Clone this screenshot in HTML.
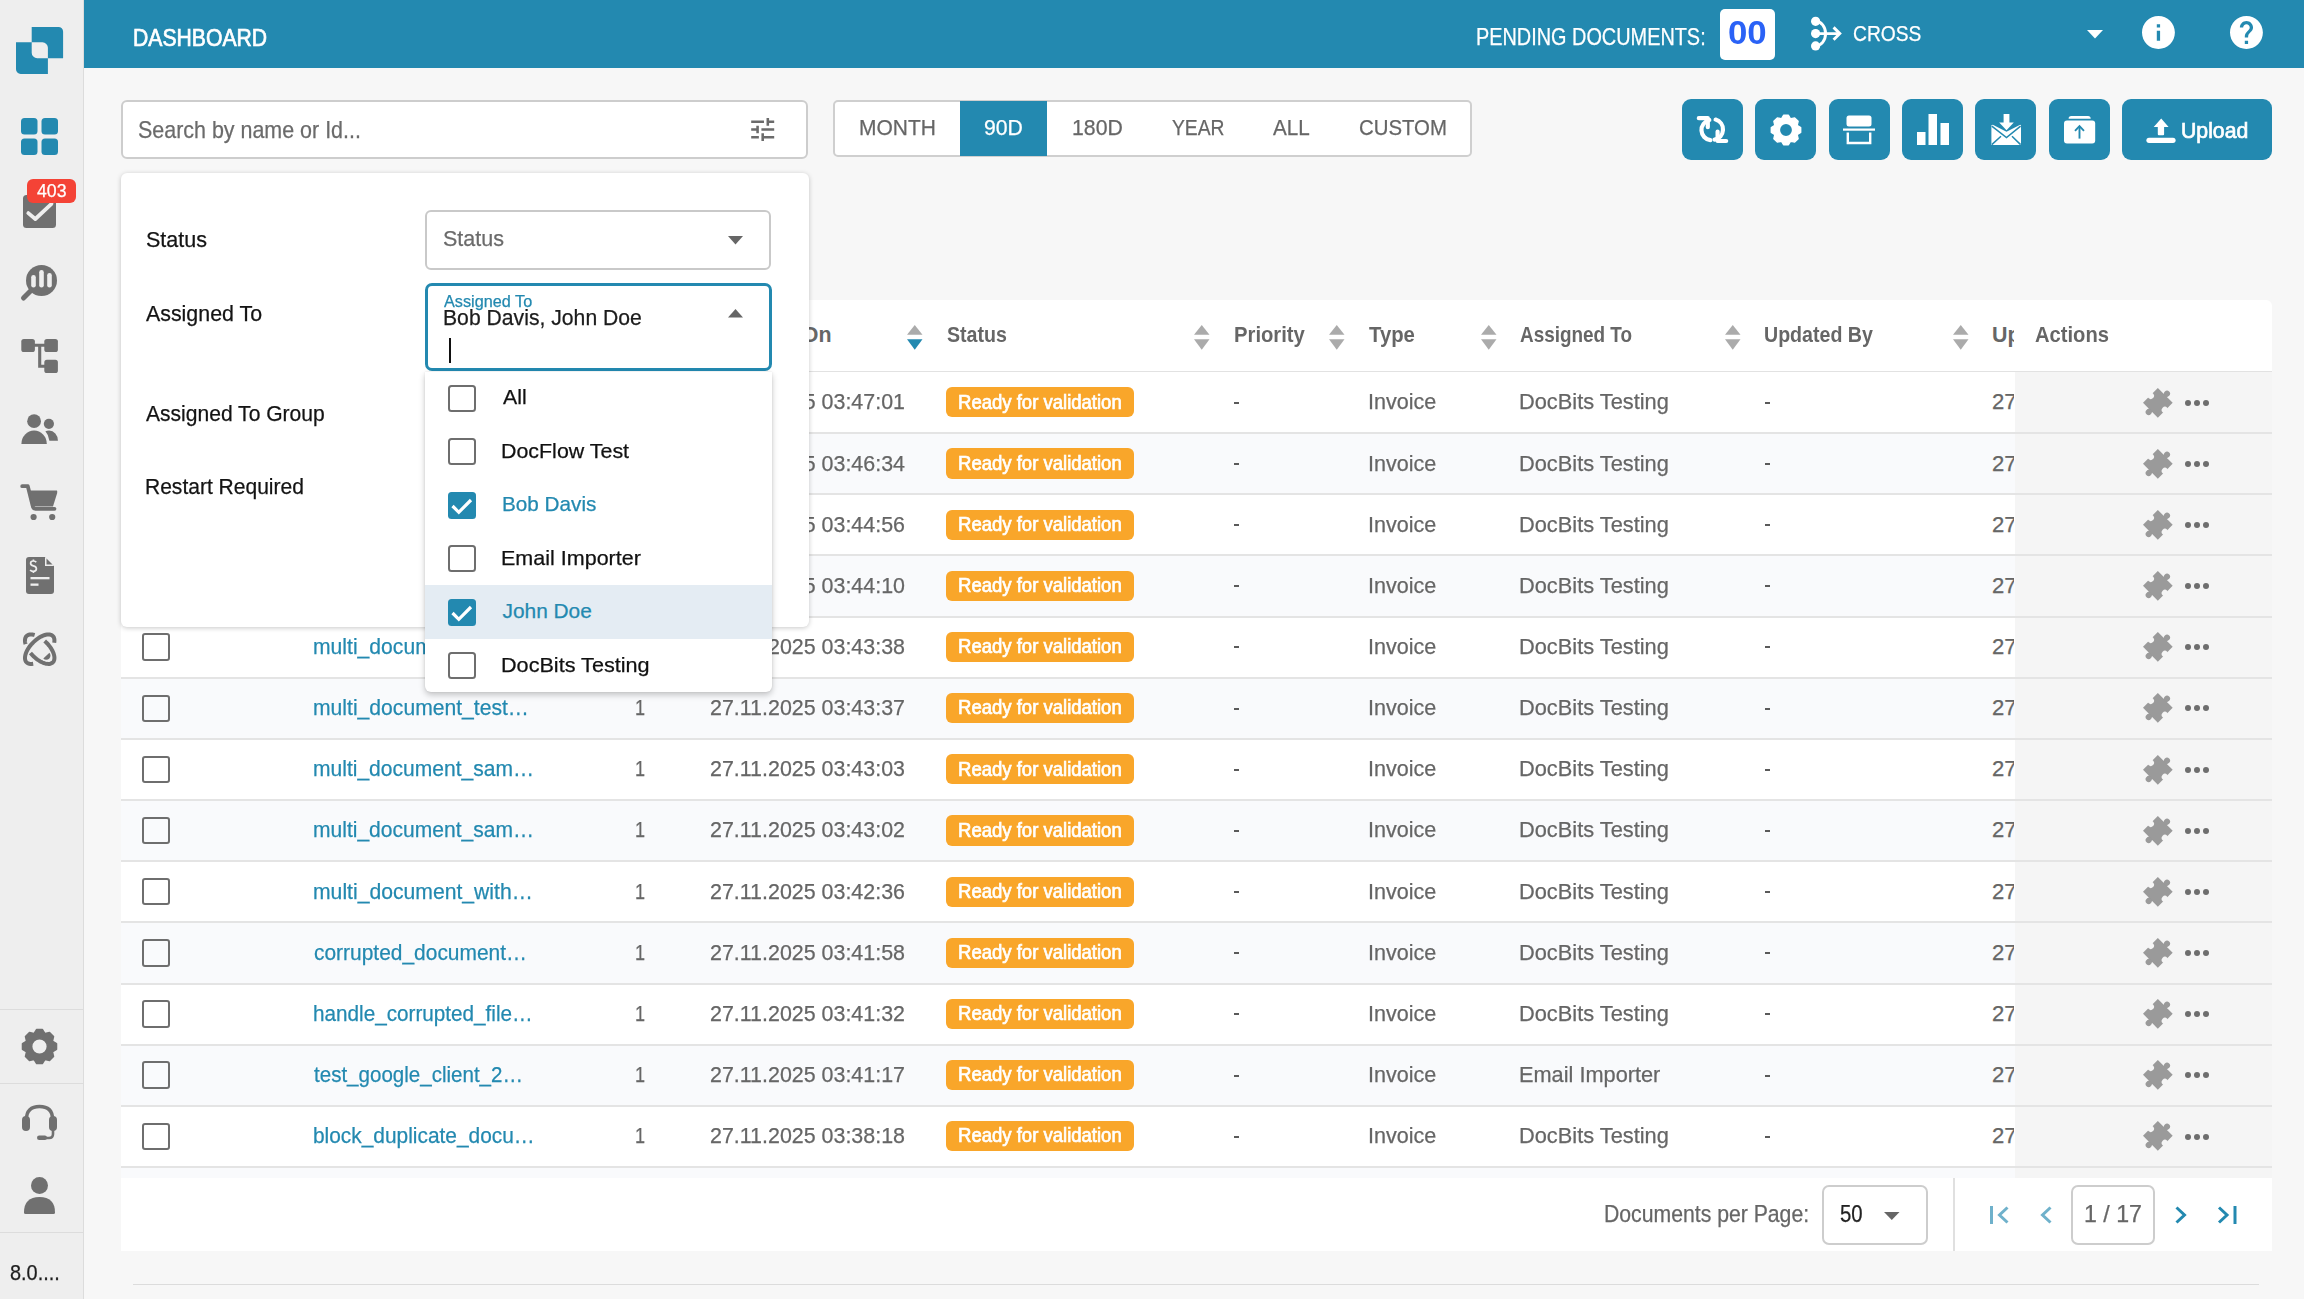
<!DOCTYPE html>
<html><head><meta charset="utf-8"><title>Dashboard</title>
<style>
html,body{margin:0;padding:0;width:2304px;height:1299px;overflow:hidden;background:#f7f7f7;font-family:"Liberation Sans",sans-serif;}
.a{position:absolute;box-sizing:border-box;}
.t{position:absolute;white-space:nowrap;line-height:1;transform-origin:0 0;}
svg.a{overflow:visible;}
</style></head><body>
<div class="a" style="left:0px;top:0px;width:84px;height:1299px;background:#eeeeee;border-right:1px solid #dcdcdc;"></div><svg class="a" style="left:16px;top:26.9px;width:48px;height:48px;" viewBox="0 0 48 48"><path fill="#2389b0" fill-rule="evenodd" d="M15.7 0 H42.5 A4.6 4.6 0 0 1 47.1 4.6 V31.2 H31.9 V46.9 H4.6 A4.6 4.6 0 0 1 0 42.3 V15.3 H15.7 Z M15.7 15.3 H26.4 A5.5 5.5 0 0 1 31.9 20.8 V31.2 H21.2 A5.5 5.5 0 0 1 15.7 25.7 Z"/></svg><svg class="a" style="left:21px;top:118px;width:37px;height:37px;" viewBox="0 0 37 37"><g fill="#2389b0"><rect x="0" y="0" width="16.5" height="16.5" rx="3.5"/><rect x="20.5" y="0" width="16.5" height="16.5" rx="3.5"/><rect x="0" y="20.5" width="16.5" height="16.5" rx="3.5"/><rect x="20.5" y="20.5" width="16.5" height="16.5" rx="3.5"/></g></svg><svg class="a" style="left:23px;top:195px;width:33px;height:33px;" viewBox="0 0 33 33"><rect x="0" y="0" width="33" height="33" rx="3.5" fill="#707070"/><path d="M5.3 18.1 L12.3 24 L28.5 8.9" stroke="#eeeeee" stroke-width="3.8" fill="none" stroke-linecap="round" stroke-linejoin="round"/></svg><div class="a" style="left:27px;top:179px;width:49px;height:24px;background:#f44336;border-radius:6px;"></div><div class="t" id="t0" style="left:37.00px;top:182.30px;font-size:18.0px;color:#fff;font-weight:normal;transform:scaleX(0.9826);-webkit-text-stroke:0.25px #fff;">403</div><svg class="a" style="left:21px;top:264px;width:37px;height:37px;" viewBox="0 0 37 37"><circle cx="20.5" cy="16.5" r="15.5" fill="#707070"/><g fill="#eeeeee"><rect x="10.2" y="11" width="4.6" height="12.5" rx="2.3"/><rect x="18.2" y="6" width="4.6" height="17.5" rx="2.3"/><rect x="26.2" y="9" width="4.6" height="14.5" rx="2.3"/></g><path d="M9.5 27 L2.5 34" stroke="#707070" stroke-width="5" stroke-linecap="round"/></svg><svg class="a" style="left:21px;top:338px;width:37px;height:36px;" viewBox="0 0 37 36"><g fill="#707070"><rect x="0.3" y="0.9" width="13.6" height="13.2" rx="2.6"/><rect x="23.3" y="0.9" width="13.6" height="13.2" rx="2.6"/><rect x="23.3" y="21.8" width="13.6" height="13.2" rx="2.6"/></g><path d="M12 7.3 H25 M18.7 7.3 V28.2 H25" stroke="#707070" stroke-width="3.1" fill="none"/></svg><svg class="a" style="left:21px;top:414px;width:38px;height:31px;" viewBox="0 0 38 31"><g fill="#707070"><circle cx="13.1" cy="7.2" r="6.9"/><path d="M0.4 30 A12.7 13.4 0 0 1 25.8 30 Z"/><circle cx="27.9" cy="9.8" r="5.1"/><path d="M24.4 17.3 Q26 16.5 28.1 16.5 A 8.8 10 0 0 1 36.9 26.5 V26.7 H28.4 Q27.6 20.8 24.4 17.3 Z"/></g></svg><svg class="a" style="left:21px;top:484px;width:37px;height:36px;" viewBox="0 0 37 36"><path d="M1.2 2.2 H6.8 L11.6 21.5 Q12 24.8 14.5 24.8 H33.5" stroke="#707070" stroke-width="3.8" fill="none" stroke-linecap="round" stroke-linejoin="round"/><path d="M8.5 6.6 H35.9 Q36.4 6.8 36.2 9 L32 22.5 H11.6 Z" fill="#707070"/><circle cx="12.6" cy="33" r="3.1" fill="#707070"/><circle cx="31.2" cy="33" r="3.1" fill="#707070"/></svg><svg class="a" style="left:26px;top:557px;width:28px;height:37px;" viewBox="0 0 28 37"><path d="M3 0 H19 L28 9 V34 Q28 37 25 37 H3 Q0 37 0 34 V3 Q0 0 3 0Z" fill="#707070"/><path d="M19 0 V9 H28" fill="#eeeeee"/><path d="M19.5 0 L28 8.5 H19.5Z" fill="#eeeeee"/><path d="M20.5 1.5 L26.5 7.5 H20.5Z" fill="#707070"/><path d="M10.2 5.2 Q9.5 4 7.3 4 Q4.6 4 4.6 6.3 Q4.6 8.3 7.3 8.9 Q10.4 9.6 10.4 11.8 Q10.4 14.3 7.3 14.3 Q5 14.3 4.2 12.8 M7.4 2.6 V4 M7.4 14.3 V15.9" stroke="#eeeeee" stroke-width="1.7" fill="none"/><rect x="4.5" y="20" width="19" height="2.3" fill="#eeeeee"/><rect x="4.5" y="26.5" width="8" height="2.3" fill="#eeeeee"/></svg><svg class="a" style="left:21px;top:630px;width:38px;height:38px;" viewBox="0 0 38 38"><g fill="none" stroke="#707070" stroke-width="4"><path d="M33.20 12.70 L33.40 11.27 L33.42 9.95 L33.26 8.74 L32.92 7.65 L32.41 6.71 L31.72 5.92 L30.88 5.30 L29.89 4.84 L28.76 4.56 L27.50 4.46 L26.14 4.55 L24.69 4.81 L23.17 5.24 L21.58 5.85 L19.97 6.63 L18.34 7.55 L16.71 8.62 L15.11 9.82 L13.55 11.14 L12.05 12.55 L10.64 14.05 L9.32 15.61 L8.12 17.21 L7.05 18.84 L6.13 20.47 L5.35 22.08 L4.74 23.67 L4.31 25.19 L4.05 26.64 L3.96 28.00 L4.06 29.26 L4.34 30.39 L4.80 31.38 L5.42 32.22 L6.21 32.91 L7.15 33.42 L8.24 33.76 L9.45 33.92 L10.77 33.90 L12.20 33.70"/><path d="M13.61 5.05 L13.10 4.90 L12.59 4.78 L12.09 4.68 L11.60 4.59 L11.12 4.53 L10.65 4.49 L10.20 4.47 L9.75 4.47 L9.32 4.49 L8.90 4.53 L8.49 4.59 L8.10 4.67 L7.72 4.77 L7.36 4.90 L7.02 5.04 L6.69 5.20 L6.38 5.38 L6.08 5.59 L5.81 5.81 L5.55 6.05 L5.31 6.31 L5.09 6.58 L4.88 6.88 L4.70 7.19 L4.54 7.52 L4.40 7.86 L4.27 8.22 L4.17 8.60 L4.09 8.99 L4.03 9.40 L3.99 9.82 L3.97 10.25 L3.97 10.70 L3.99 11.15 L4.03 11.62 L4.09 12.10 L4.18 12.59 L4.28 13.09 L4.40 13.60 L4.55 14.11"/><path d="M23.69 11.00 L24.88 12.09 L26.01 13.24 L27.10 14.43 L28.12 15.66 L29.06 16.91 L29.93 18.18 L30.72 19.46 L31.41 20.74 L32.01 22.00 L32.51 23.25 L32.90 24.46 L33.19 25.63 L33.37 26.76 L33.44 27.83 L33.39 28.83 L33.24 29.76 L32.97 30.61 L32.60 31.38 L32.13 32.05 L31.55 32.63 L30.88 33.10 L30.11 33.48 L29.26 33.74 L28.33 33.89 L27.32 33.94 L26.25 33.87 L25.13 33.69 L23.95 33.40 L22.74 33.01 L21.50 32.51 L20.23 31.91 L18.95 31.21 L17.68 30.43 L16.40 29.56 L15.15 28.61 L13.92 27.59 L12.73 26.51 L11.59 25.37 L10.49 24.19 L9.46 22.97"/></g><path d="M22.3 28.4 A4.14 4.14 0 0 0 28.4 22.8 Z" fill="#707070"/></svg><div class="a" style="left:0px;top:1009px;width:83px;height:1px;background:#dcdcdc;"></div><div class="a" style="left:0px;top:1083px;width:83px;height:1px;background:#dcdcdc;"></div><div class="a" style="left:0px;top:1232px;width:83px;height:1px;background:#dcdcdc;"></div><svg class="a" style="left:21px;top:1028px;width:37px;height:37px;" viewBox="0 0 37 37"><path fill="#707070" fill-rule="evenodd" stroke="#707070" stroke-width="1.6" stroke-linejoin="round" d="M13.37 5.26 L15.71 1.53 L21.29 1.53 L23.63 5.26 L24.23 5.51 L28.53 4.53 L32.47 8.47 L31.49 12.77 L31.74 13.37 L35.47 15.71 L35.47 21.29 L31.74 23.63 L31.49 24.23 L32.47 28.53 L28.53 32.47 L24.23 31.49 L23.63 31.74 L21.29 35.47 L15.71 35.47 L13.37 31.74 L12.77 31.49 L8.47 32.47 L4.53 28.53 L5.51 24.23 L5.26 23.63 L1.53 21.29 L1.53 15.71 L5.26 13.37 L5.51 12.77 L4.53 8.47 L8.47 4.53 L12.77 5.51Z M26.40 18.50 A7.9 7.9 0 1 0 10.60 18.50 A7.9 7.9 0 1 0 26.40 18.50Z"/></svg><svg class="a" style="left:22px;top:1104px;width:35px;height:36px;" viewBox="0 0 35 36"><path d="M4.5 19 V15 Q4.5 2.5 17.5 2.5 Q30.5 2.5 30.5 15 V19" stroke="#707070" stroke-width="3.4" fill="none"/><rect x="0" y="12" width="8" height="15" rx="4" fill="#707070"/><rect x="27" y="12" width="8" height="15" rx="4" fill="#707070"/><path d="M31 24 V30 Q31 34 27 34 H21" stroke="#707070" stroke-width="2.6" fill="none"/><rect x="15" y="31.5" width="10" height="4.5" rx="2.2" fill="#707070"/></svg><svg class="a" style="left:24px;top:1177px;width:31px;height:37px;" viewBox="0 0 31 37"><circle cx="15.5" cy="8.5" r="8.5" fill="#707070"/><path d="M0 35.5 Q0 20 15.5 20 Q31 20 31 35.5 Q31 37 29.5 37 H1.5 Q0 37 0 35.5Z" fill="#707070"/></svg><div class="t" id="t1" style="left:9.70px;top:1263.48px;font-size:21.43px;color:#1e1e1e;font-weight:normal;transform:scaleX(0.9296);-webkit-text-stroke:0.25px #1e1e1e;">8.0....</div><div class="a" style="left:84px;top:0px;width:2220px;height:68px;background:#2389b0;"></div><div class="t" id="t2" style="left:133.11px;top:26.02px;font-size:23.86px;color:#fff;font-weight:normal;transform:scaleX(0.8872);-webkit-text-stroke:0.7px #fff;">DASHBOARD</div><div class="t" id="t3" style="left:1475.66px;top:25.77px;font-size:23.57px;color:#fff;font-weight:normal;transform:scaleX(0.8434);-webkit-text-stroke:0.25px #fff;">PENDING DOCUMENTS:</div><div class="a" style="left:1720px;top:9px;width:55px;height:51px;background:#fff;border-radius:5px;"></div><div class="t" id="t4" style="left:1728.43px;top:17.43px;font-size:32.43px;color:#2a62f6;font-weight:bold;transform:scaleX(1.0725);">00</div><svg class="a" style="left:1810px;top:16px;width:32px;height:34px;" viewBox="0 0 32 34"><g fill="#fff"><circle cx="5.6" cy="5.3" r="4.6"/><circle cx="5.6" cy="17.6" r="4.6"/><circle cx="5.6" cy="29.9" r="4.6"/></g><path d="M5.6 5.3 A 10 12.3 0 0 1 5.6 29.9 M8 17.6 H30" stroke="#fff" stroke-width="2.9" fill="none"/><path d="M24.6 12.4 L29.8 17.6 L24.6 22.8" stroke="#fff" stroke-width="2.9" fill="none" stroke-linecap="square"/></svg><div class="t" id="t5" style="left:1853.44px;top:22.83px;font-size:22.43px;color:#fff;font-weight:normal;transform:scaleX(0.8575);-webkit-text-stroke:0.25px #fff;">CROSS</div><svg class="a" style="left:2087px;top:30px;width:16px;height:9px;" viewBox="0 0 16 9"><path d="M0 0 H16 L8 8.5Z" fill="#fff"/></svg><svg class="a" style="left:2141.5px;top:15.9px;width:32.9px;height:32.9px;" viewBox="2 2 20 20"><path fill="#fff" d="M12 2C6.48 2 2 6.48 2 12s4.48 10 10 10 10-4.48 10-10S17.52 2 12 2zm1 15h-2v-6h2v6zm0-8h-2V7h2v2z"/></svg><svg class="a" style="left:2229.7px;top:15.9px;width:32.9px;height:32.9px;" viewBox="2 2 20 20"><path fill="#fff" d="M12 2C6.48 2 2 6.48 2 12s4.48 10 10 10 10-4.48 10-10S17.52 2 12 2zm1 17h-2v-2h2v2zm2.07-7.75-.9.92C13.45 12.9 13 13.5 13 15h-2v-.5c0-1.1.45-2.1 1.17-2.83l1.24-1.26c.37-.36.59-.86.59-1.41 0-1.1-.9-2-2-2s-2 .9-2 2H8c0-2.210 1.79-4 4-4s4 1.79 4 4c0 .88-.36 1.68-.93 2.25z"/></svg><div class="a" style="left:121px;top:100px;width:687px;height:59px;background:#fff;border:2px solid #cdcdcd;border-radius:6px;"></div><div class="t" id="t6" style="left:138.11px;top:118.10px;font-size:24.0px;color:#6b6b6b;font-weight:normal;transform:scaleX(0.8935);-webkit-text-stroke:0.25px #6b6b6b;">Search by name or Id...</div><svg class="a" style="left:751.2px;top:117.9px;width:23.4px;height:23px;overflow:hidden;" viewBox="3 3 18 18"><path fill="#6b6b6b" d="M3 17v2h6v-2H3zM3 5v2h10V5H3zm10 16v-2h8v-2h-8v-2h-2v6h2zM7 9v2H3v2h4v2h2V9H7zm14 4v-2H11v2h10zm-6-4h2V7h4V5h-4V3h-2v6z"/></svg><div class="a" style="left:833px;top:100px;width:639px;height:57px;background:#fff;border:2px solid #cfcfcf;border-radius:5px;"></div><div class="a" style="left:960px;top:101px;width:87px;height:55px;background:#2389b0;"></div><div class="t" id="t7" style="left:858.95px;top:116.88px;font-size:22.14px;color:#666666;font-weight:normal;transform:scaleX(0.9478);-webkit-text-stroke:0.25px #666666;">MONTH</div><div class="t" id="t8" style="left:984.44px;top:116.88px;font-size:22.14px;color:#fff;font-weight:normal;transform:scaleX(0.9583);-webkit-text-stroke:0.25px #fff;">90D</div><div class="t" id="t9" style="left:1071.64px;top:116.88px;font-size:22.14px;color:#666666;font-weight:normal;transform:scaleX(0.9604);-webkit-text-stroke:0.25px #666666;">180D</div><div class="t" id="t10" style="left:1172.20px;top:116.88px;font-size:22.14px;color:#666666;font-weight:normal;transform:scaleX(0.8723);-webkit-text-stroke:0.25px #666666;">YEAR</div><div class="t" id="t11" style="left:1273.40px;top:116.88px;font-size:22.14px;color:#666666;font-weight:normal;transform:scaleX(0.9344);-webkit-text-stroke:0.25px #666666;">ALL</div><div class="t" id="t12" style="left:1359.08px;top:116.88px;font-size:22.14px;color:#666666;font-weight:normal;transform:scaleX(0.9211);-webkit-text-stroke:0.25px #666666;">CUSTOM</div><div class="a" style="left:1682px;top:99px;width:61px;height:61px;background:#2389b0;border-radius:9px;"></div><div class="a" style="left:1755px;top:99px;width:61px;height:61px;background:#2389b0;border-radius:9px;"></div><div class="a" style="left:1829px;top:99px;width:61px;height:61px;background:#2389b0;border-radius:9px;"></div><div class="a" style="left:1902px;top:99px;width:61px;height:61px;background:#2389b0;border-radius:9px;"></div><div class="a" style="left:1975px;top:99px;width:61px;height:61px;background:#2389b0;border-radius:9px;"></div><div class="a" style="left:2049px;top:99px;width:61px;height:61px;background:#2389b0;border-radius:9px;"></div><svg class="a" style="left:1697px;top:115px;width:31px;height:29px;" viewBox="0 0 31 29"><g stroke="#fff" stroke-width="4.2" fill="none" stroke-linecap="round" stroke-linejoin="round"><path d="M12.3 5 A 10.3 10.3 0 0 0 13.4 25.2"/><path d="M1.8 3.2 H10.8 V12.2"/><path d="M18.6 4.6 A 10.3 10.3 0 0 1 17.6 24.6"/><path d="M29.2 26 H20.6 V16.6"/></g></svg><svg class="a" style="left:1770px;top:114px;width:32px;height:32px;" viewBox="0 0 32 32"><path fill="#fff" fill-rule="evenodd" stroke="#fff" stroke-width="1.4" stroke-linejoin="round" d="M11.60 4.51 L13.56 1.30 L18.44 1.30 L20.40 4.51 L21.01 4.77 L24.67 3.88 L28.12 7.33 L27.23 10.99 L27.49 11.60 L30.70 13.56 L30.70 18.44 L27.49 20.40 L27.23 21.01 L28.12 24.67 L24.67 28.12 L21.01 27.23 L20.40 27.49 L18.44 30.70 L13.56 30.70 L11.60 27.49 L10.99 27.23 L7.33 28.12 L3.88 24.67 L4.77 21.01 L4.51 20.40 L1.30 18.44 L1.30 13.56 L4.51 11.60 L4.77 10.99 L3.88 7.33 L7.33 3.88 L10.99 4.77Z M22.60 16.00 A6.6 6.6 0 1 0 9.40 16.00 A6.6 6.6 0 1 0 22.60 16.00Z"/></svg><svg class="a" style="left:1843px;top:115px;width:32px;height:30px;" viewBox="0 0 32 30"><rect x="3.5" y="0.5" width="25" height="11" rx="2.5" fill="#fff"/><rect x="0" y="13.5" width="32" height="2.2" fill="#fff"/><path d="M4.8 17.5 V28 H27.2 V17.5" stroke="#fff" stroke-width="2.4" fill="none"/></svg><svg class="a" style="left:1917px;top:114px;width:32px;height:31px;" viewBox="0 0 32 31"><g fill="#fff"><rect x="0" y="18" width="8.5" height="13"/><rect x="11.5" y="0" width="8.5" height="31"/><rect x="23.5" y="9" width="8.5" height="22"/></g></svg><svg class="a" style="left:1991px;top:114px;width:30px;height:31px;" viewBox="0 0 30 31"><rect x="12.6" y="0" width="5.8" height="9.5" fill="#fff"/><path d="M8.2 8.6 H22.8 L15.5 16.3Z" fill="#fff"/><path d="M0.4 11.3 L1.8 10.8 L15.5 17.8 L29.2 10.8 L30 11.3 V31 H0.4Z" fill="#fff"/><path d="M0.8 12.2 L15.5 23.6 L29.6 12.2 M0.8 30.6 L10 22.2 M29.6 30.6 L21 22.2" stroke="#2389b0" stroke-width="1.5" fill="none"/></svg><svg class="a" style="left:2064px;top:115.7px;width:31.2px;height:27.5px;" viewBox="0 0 31.2 27.5"><path d="M4.6 2.7 Q4.6 0 7.3 0 H24 Q26.7 0 26.7 2.7Z" fill="#fff"/><rect x="0" y="4.5" width="31.2" height="23" rx="3" fill="#fff"/><path d="M15.5 22.6 V10.4" stroke="#2389b0" stroke-width="1.9"/><path d="M11 14.9 L15.5 10.2 L20 14.9" stroke="#2389b0" stroke-width="1.9" fill="none"/></svg><div class="a" style="left:2122px;top:99px;width:150px;height:61px;background:#2389b0;border-radius:9px;"></div><svg class="a" style="left:2146px;top:118px;width:30px;height:25px;" viewBox="0 0 30 25"><path d="M15.2 0.6 L22.6 9 H18.1 V16.3 Q18.1 17.3 17.1 17.3 H12.8 Q11.8 17.3 11.8 16.3 V9 H7.7Z" fill="#fff"/><rect x="0.4" y="19.7" width="29.2" height="5.2" rx="2.6" fill="#fff"/></svg><div class="t" id="t13" style="left:2180.55px;top:120.15px;font-size:22.29px;color:#fff;font-weight:normal;transform:scaleX(0.9529);-webkit-text-stroke:0.7px #fff;">Upload</div><svg width="0" height="0" style="position:absolute"><defs><mask id="pzm" maskUnits="userSpaceOnUse" x="-20" y="-20" width="40" height="40"><rect x="-20" y="-20" width="40" height="40" fill="#fff"/><circle cx="-10" cy="0" r="3.2" fill="#000"/><circle cx="10" cy="0" r="3.2" fill="#000"/></mask><symbol id="puz" viewBox="0 0 30 30" overflow="visible"><g transform="translate(14.84 14.86) rotate(45)"><g mask="url(#pzm)" fill="#9a9a9a"><rect x="-10.5" y="-10.5" width="21" height="21"/><rect x="-2.3" y="-12.5" width="4.6" height="3"/><circle cx="0" cy="-13" r="3"/><rect x="-2.3" y="9.5" width="4.6" height="3"/><circle cx="0" cy="13" r="3"/></g></g></symbol></defs></svg><div class="a" style="left:121px;top:300px;width:2151px;height:72px;background:#fff;border-top-left-radius:6px;border-top-right-radius:6px;"></div><div class="a" style="left:121px;top:371px;width:2151px;height:2px;background:#e2e2e2;"></div><div class="t" id="t14" style="left:716.00px;top:324.68px;font-size:21.43px;color:#666666;font-weight:bold;">Created On</div><svg class="a" style="left:906.5px;top:324.7px;width:15.5px;height:25px;" viewBox="0 0 15.5 25"><path d="M7.75 0 L15.5 9.7 H0Z" fill="#ababab"/><path d="M0 14.3 H15.5 L7.75 24.8Z" fill="#2389b0"/></svg><div class="t" id="t15" style="left:946.90px;top:324.68px;font-size:21.43px;color:#666666;font-weight:bold;transform:scaleX(0.9153);">Status</div><svg class="a" style="left:1194px;top:324.7px;width:15.5px;height:25px;" viewBox="0 0 15.5 25"><path d="M7.75 0 L15.5 9.7 H0Z" fill="#ababab"/><path d="M0 14.3 H15.5 L7.75 24.8Z" fill="#ababab"/></svg><div class="t" id="t16" style="left:1233.66px;top:324.68px;font-size:21.43px;color:#666666;font-weight:bold;transform:scaleX(0.9449);">Priority</div><svg class="a" style="left:1329px;top:324.7px;width:15.5px;height:25px;" viewBox="0 0 15.5 25"><path d="M7.75 0 L15.5 9.7 H0Z" fill="#ababab"/><path d="M0 14.3 H15.5 L7.75 24.8Z" fill="#ababab"/></svg><div class="t" id="t17" style="left:1369.30px;top:324.68px;font-size:21.43px;color:#666666;font-weight:bold;transform:scaleX(0.9486);">Type</div><svg class="a" style="left:1480.7px;top:324.7px;width:15.5px;height:25px;" viewBox="0 0 15.5 25"><path d="M7.75 0 L15.5 9.7 H0Z" fill="#ababab"/><path d="M0 14.3 H15.5 L7.75 24.8Z" fill="#ababab"/></svg><div class="t" id="t18" style="left:1520.40px;top:324.68px;font-size:21.43px;color:#666666;font-weight:bold;transform:scaleX(0.8828);">Assigned To</div><svg class="a" style="left:1725.4px;top:324.7px;width:15.5px;height:25px;" viewBox="0 0 15.5 25"><path d="M7.75 0 L15.5 9.7 H0Z" fill="#ababab"/><path d="M0 14.3 H15.5 L7.75 24.8Z" fill="#ababab"/></svg><div class="t" id="t19" style="left:1764.09px;top:324.68px;font-size:21.43px;color:#666666;font-weight:bold;transform:scaleX(0.9144);">Updated By</div><svg class="a" style="left:1952.8px;top:324.7px;width:15.5px;height:25px;" viewBox="0 0 15.5 25"><path d="M7.75 0 L15.5 9.7 H0Z" fill="#ababab"/><path d="M0 14.3 H15.5 L7.75 24.8Z" fill="#ababab"/></svg><div class="t" id="t20" style="left:1992.00px;top:324.68px;font-size:21.43px;color:#666666;font-weight:bold;clip-path:inset(-5px calc(100% - 22px) -5px -5px);">Updated On</div><div class="t" id="t21" style="left:2035.00px;top:324.68px;font-size:21.43px;color:#666666;font-weight:bold;transform:scaleX(0.9410);">Actions</div><div class="a" style="left:121px;top:372.0px;width:2151px;height:61.14999999999998px;background:#ffffff;"></div><div class="a" style="left:2015px;top:372.0px;width:257px;height:61.14999999999998px;background:#f5f5f5;"></div><div class="a" style="left:142px;top:388.8px;width:27.5px;height:27.399999999999977px;border:2px solid #6e6e6e;border-radius:3px;"></div><div class="t" id="t22" style="left:312.65px;top:391.38px;font-size:22.14px;color:#2389b0;font-weight:normal;transform:scaleX(0.9545);-webkit-text-stroke:0.25px #2389b0;">multi_document_test…</div><div class="t" id="t23" style="left:635.08px;top:391.38px;font-size:22.14px;color:#666666;font-weight:normal;transform:scaleX(0.8182);-webkit-text-stroke:0.25px #666666;">1</div><div class="t" id="t24" style="left:710.33px;top:391.38px;font-size:22.14px;color:#666666;font-weight:normal;transform:scaleX(0.9682);-webkit-text-stroke:0.25px #666666;">27.11.2025 03:47:01</div><div class="a" style="left:946.4px;top:387.3px;width:187.19999999999993px;height:30.19999999999999px;background:#f9a62a;border-radius:6px;"></div><div class="t" id="t25" style="left:958.45px;top:392.68px;font-size:19.43px;color:#fff;font-weight:normal;transform:scaleX(0.9537);-webkit-text-stroke:0.7px #fff;">Ready for validation</div><div class="a" style="left:1234px;top:402px;width:5px;height:2px;background:#5a5a5a;"></div><div class="t" id="t26" style="left:1368.05px;top:391.38px;font-size:22.14px;color:#666666;font-weight:normal;transform:scaleX(0.9735);-webkit-text-stroke:0.25px #666666;">Invoice</div><div class="t" id="t27" style="left:1519.41px;top:391.38px;font-size:22.14px;color:#666666;font-weight:normal;transform:scaleX(0.9855);-webkit-text-stroke:0.25px #666666;">DocBits Testing</div><div class="a" style="left:1765px;top:402px;width:5px;height:2px;background:#5a5a5a;"></div><div class="t" id="t28" style="left:1992.00px;top:391.38px;font-size:22.14px;color:#666666;font-weight:normal;-webkit-text-stroke:0.25px #666666;clip-path:inset(-5px calc(100% - 22px) -5px -5px);">27.11.2025 03:47</div><svg class="a" style="left:2142.5px;top:387.60px;width:30px;height:30px;overflow:visible" viewBox="0 0 30 30"><use href="#puz"/></svg><div class="a" style="left:2184.8px;top:399.7px;width:6.0px;height:6.0px;background:#6e6e6e;border-radius:50%;"></div><div class="a" style="left:2193.9px;top:399.7px;width:6.0px;height:6.0px;background:#6e6e6e;border-radius:50%;"></div><div class="a" style="left:2203.1px;top:399.7px;width:6.0px;height:6.0px;background:#6e6e6e;border-radius:50%;"></div><div class="a" style="left:121px;top:433.15px;width:2151px;height:61.150000000000034px;background:#f9fafc;"></div><div class="a" style="left:2015px;top:433.15px;width:257px;height:61.150000000000034px;background:#f5f5f5;"></div><div class="a" style="left:142px;top:449.95px;width:27.5px;height:27.400000000000034px;border:2px solid #6e6e6e;border-radius:3px;"></div><div class="t" id="t29" style="left:312.65px;top:452.53px;font-size:22.14px;color:#2389b0;font-weight:normal;transform:scaleX(0.9508);-webkit-text-stroke:0.25px #2389b0;">multi_document_sam…</div><div class="t" id="t30" style="left:635.08px;top:452.53px;font-size:22.14px;color:#666666;font-weight:normal;transform:scaleX(0.8182);-webkit-text-stroke:0.25px #666666;">1</div><div class="t" id="t31" style="left:710.33px;top:452.53px;font-size:22.14px;color:#666666;font-weight:normal;transform:scaleX(0.9682);-webkit-text-stroke:0.25px #666666;">27.11.2025 03:46:34</div><div class="a" style="left:946.4px;top:448.45px;width:187.19999999999993px;height:30.19999999999999px;background:#f9a62a;border-radius:6px;"></div><div class="t" id="t32" style="left:958.45px;top:453.83px;font-size:19.43px;color:#fff;font-weight:normal;transform:scaleX(0.9537);-webkit-text-stroke:0.7px #fff;">Ready for validation</div><div class="a" style="left:1234px;top:463px;width:5px;height:2px;background:#5a5a5a;"></div><div class="t" id="t33" style="left:1368.05px;top:452.53px;font-size:22.14px;color:#666666;font-weight:normal;transform:scaleX(0.9735);-webkit-text-stroke:0.25px #666666;">Invoice</div><div class="t" id="t34" style="left:1519.41px;top:452.53px;font-size:22.14px;color:#666666;font-weight:normal;transform:scaleX(0.9855);-webkit-text-stroke:0.25px #666666;">DocBits Testing</div><div class="a" style="left:1765px;top:463px;width:5px;height:2px;background:#5a5a5a;"></div><div class="t" id="t35" style="left:1992.00px;top:452.53px;font-size:22.14px;color:#666666;font-weight:normal;-webkit-text-stroke:0.25px #666666;clip-path:inset(-5px calc(100% - 22px) -5px -5px);">27.11.2025 03:47</div><svg class="a" style="left:2142.5px;top:448.75px;width:30px;height:30px;overflow:visible" viewBox="0 0 30 30"><use href="#puz"/></svg><div class="a" style="left:2184.8px;top:460.85px;width:6.0px;height:6.0px;background:#6e6e6e;border-radius:50%;"></div><div class="a" style="left:2193.9px;top:460.85px;width:6.0px;height:6.0px;background:#6e6e6e;border-radius:50%;"></div><div class="a" style="left:2203.1px;top:460.85px;width:6.0px;height:6.0px;background:#6e6e6e;border-radius:50%;"></div><div class="a" style="left:121px;top:494.3px;width:2151px;height:61.150000000000034px;background:#ffffff;"></div><div class="a" style="left:2015px;top:494.3px;width:257px;height:61.150000000000034px;background:#f5f5f5;"></div><div class="a" style="left:142px;top:511.1px;width:27.5px;height:27.399999999999977px;border:2px solid #6e6e6e;border-radius:3px;"></div><div class="t" id="t36" style="left:312.65px;top:513.68px;font-size:22.14px;color:#2389b0;font-weight:normal;transform:scaleX(0.9508);-webkit-text-stroke:0.25px #2389b0;">multi_document_sam…</div><div class="t" id="t37" style="left:635.08px;top:513.68px;font-size:22.14px;color:#666666;font-weight:normal;transform:scaleX(0.8182);-webkit-text-stroke:0.25px #666666;">1</div><div class="t" id="t38" style="left:710.33px;top:513.68px;font-size:22.14px;color:#666666;font-weight:normal;transform:scaleX(0.9682);-webkit-text-stroke:0.25px #666666;">27.11.2025 03:44:56</div><div class="a" style="left:946.4px;top:509.6px;width:187.19999999999993px;height:30.199999999999932px;background:#f9a62a;border-radius:6px;"></div><div class="t" id="t39" style="left:958.45px;top:514.98px;font-size:19.43px;color:#fff;font-weight:normal;transform:scaleX(0.9537);-webkit-text-stroke:0.7px #fff;">Ready for validation</div><div class="a" style="left:1234px;top:524px;width:5px;height:2px;background:#5a5a5a;"></div><div class="t" id="t40" style="left:1368.05px;top:513.68px;font-size:22.14px;color:#666666;font-weight:normal;transform:scaleX(0.9735);-webkit-text-stroke:0.25px #666666;">Invoice</div><div class="t" id="t41" style="left:1519.41px;top:513.68px;font-size:22.14px;color:#666666;font-weight:normal;transform:scaleX(0.9855);-webkit-text-stroke:0.25px #666666;">DocBits Testing</div><div class="a" style="left:1765px;top:524px;width:5px;height:2px;background:#5a5a5a;"></div><div class="t" id="t42" style="left:1992.00px;top:513.68px;font-size:22.14px;color:#666666;font-weight:normal;-webkit-text-stroke:0.25px #666666;clip-path:inset(-5px calc(100% - 22px) -5px -5px);">27.11.2025 03:47</div><svg class="a" style="left:2142.5px;top:509.90px;width:30px;height:30px;overflow:visible" viewBox="0 0 30 30"><use href="#puz"/></svg><div class="a" style="left:2184.8px;top:522.0px;width:6.0px;height:6.0px;background:#6e6e6e;border-radius:50%;"></div><div class="a" style="left:2193.9px;top:522.0px;width:6.0px;height:6.0px;background:#6e6e6e;border-radius:50%;"></div><div class="a" style="left:2203.1px;top:522.0px;width:6.0px;height:6.0px;background:#6e6e6e;border-radius:50%;"></div><div class="a" style="left:121px;top:555.45px;width:2151px;height:61.14999999999998px;background:#f9fafc;"></div><div class="a" style="left:2015px;top:555.45px;width:257px;height:61.14999999999998px;background:#f5f5f5;"></div><div class="a" style="left:142px;top:572.25px;width:27.5px;height:27.399999999999977px;border:2px solid #6e6e6e;border-radius:3px;"></div><div class="t" id="t43" style="left:312.64px;top:574.83px;font-size:22.14px;color:#2389b0;font-weight:normal;transform:scaleX(0.9558);-webkit-text-stroke:0.25px #2389b0;">multi_document_with…</div><div class="t" id="t44" style="left:635.08px;top:574.83px;font-size:22.14px;color:#666666;font-weight:normal;transform:scaleX(0.8182);-webkit-text-stroke:0.25px #666666;">1</div><div class="t" id="t45" style="left:710.33px;top:574.83px;font-size:22.14px;color:#666666;font-weight:normal;transform:scaleX(0.9682);-webkit-text-stroke:0.25px #666666;">27.11.2025 03:44:10</div><div class="a" style="left:946.4px;top:570.75px;width:187.19999999999993px;height:30.200000000000045px;background:#f9a62a;border-radius:6px;"></div><div class="t" id="t46" style="left:958.45px;top:576.13px;font-size:19.43px;color:#fff;font-weight:normal;transform:scaleX(0.9537);-webkit-text-stroke:0.7px #fff;">Ready for validation</div><div class="a" style="left:1234px;top:585px;width:5px;height:2px;background:#5a5a5a;"></div><div class="t" id="t47" style="left:1368.05px;top:574.83px;font-size:22.14px;color:#666666;font-weight:normal;transform:scaleX(0.9735);-webkit-text-stroke:0.25px #666666;">Invoice</div><div class="t" id="t48" style="left:1519.41px;top:574.83px;font-size:22.14px;color:#666666;font-weight:normal;transform:scaleX(0.9855);-webkit-text-stroke:0.25px #666666;">DocBits Testing</div><div class="a" style="left:1765px;top:585px;width:5px;height:2px;background:#5a5a5a;"></div><div class="t" id="t49" style="left:1992.00px;top:574.83px;font-size:22.14px;color:#666666;font-weight:normal;-webkit-text-stroke:0.25px #666666;clip-path:inset(-5px calc(100% - 22px) -5px -5px);">27.11.2025 03:47</div><svg class="a" style="left:2142.5px;top:571.05px;width:30px;height:30px;overflow:visible" viewBox="0 0 30 30"><use href="#puz"/></svg><div class="a" style="left:2184.8px;top:583.15px;width:6.0px;height:6.0px;background:#6e6e6e;border-radius:50%;"></div><div class="a" style="left:2193.9px;top:583.15px;width:6.0px;height:6.0px;background:#6e6e6e;border-radius:50%;"></div><div class="a" style="left:2203.1px;top:583.15px;width:6.0px;height:6.0px;background:#6e6e6e;border-radius:50%;"></div><div class="a" style="left:121px;top:616.6px;width:2151px;height:61.14999999999998px;background:#ffffff;"></div><div class="a" style="left:2015px;top:616.6px;width:257px;height:61.14999999999998px;background:#f5f5f5;"></div><div class="a" style="left:142px;top:633.4px;width:27.5px;height:27.399999999999977px;border:2px solid #6e6e6e;border-radius:3px;"></div><div class="t" id="t50" style="left:312.65px;top:635.98px;font-size:22.14px;color:#2389b0;font-weight:normal;transform:scaleX(0.9545);-webkit-text-stroke:0.25px #2389b0;">multi_document_test…</div><div class="t" id="t51" style="left:635.08px;top:635.98px;font-size:22.14px;color:#666666;font-weight:normal;transform:scaleX(0.8182);-webkit-text-stroke:0.25px #666666;">1</div><div class="t" id="t52" style="left:710.33px;top:635.98px;font-size:22.14px;color:#666666;font-weight:normal;transform:scaleX(0.9682);-webkit-text-stroke:0.25px #666666;">27.11.2025 03:43:38</div><div class="a" style="left:946.4px;top:631.9px;width:187.19999999999993px;height:30.200000000000045px;background:#f9a62a;border-radius:6px;"></div><div class="t" id="t53" style="left:958.45px;top:637.28px;font-size:19.43px;color:#fff;font-weight:normal;transform:scaleX(0.9537);-webkit-text-stroke:0.7px #fff;">Ready for validation</div><div class="a" style="left:1234px;top:646px;width:5px;height:2px;background:#5a5a5a;"></div><div class="t" id="t54" style="left:1368.05px;top:635.98px;font-size:22.14px;color:#666666;font-weight:normal;transform:scaleX(0.9735);-webkit-text-stroke:0.25px #666666;">Invoice</div><div class="t" id="t55" style="left:1519.41px;top:635.98px;font-size:22.14px;color:#666666;font-weight:normal;transform:scaleX(0.9855);-webkit-text-stroke:0.25px #666666;">DocBits Testing</div><div class="a" style="left:1765px;top:646px;width:5px;height:2px;background:#5a5a5a;"></div><div class="t" id="t56" style="left:1992.00px;top:635.98px;font-size:22.14px;color:#666666;font-weight:normal;-webkit-text-stroke:0.25px #666666;clip-path:inset(-5px calc(100% - 22px) -5px -5px);">27.11.2025 03:47</div><svg class="a" style="left:2142.5px;top:632.20px;width:30px;height:30px;overflow:visible" viewBox="0 0 30 30"><use href="#puz"/></svg><div class="a" style="left:2184.8px;top:644.3px;width:6.0px;height:6.0px;background:#6e6e6e;border-radius:50%;"></div><div class="a" style="left:2193.9px;top:644.3px;width:6.0px;height:6.0px;background:#6e6e6e;border-radius:50%;"></div><div class="a" style="left:2203.1px;top:644.3px;width:6.0px;height:6.0px;background:#6e6e6e;border-radius:50%;"></div><div class="a" style="left:121px;top:677.75px;width:2151px;height:61.14999999999998px;background:#f9fafc;"></div><div class="a" style="left:2015px;top:677.75px;width:257px;height:61.14999999999998px;background:#f5f5f5;"></div><div class="a" style="left:142px;top:694.55px;width:27.5px;height:27.40000000000009px;border:2px solid #6e6e6e;border-radius:3px;"></div><div class="t" id="t57" style="left:312.65px;top:697.13px;font-size:22.14px;color:#2389b0;font-weight:normal;transform:scaleX(0.9545);-webkit-text-stroke:0.25px #2389b0;">multi_document_test…</div><div class="t" id="t58" style="left:635.08px;top:697.13px;font-size:22.14px;color:#666666;font-weight:normal;transform:scaleX(0.8182);-webkit-text-stroke:0.25px #666666;">1</div><div class="t" id="t59" style="left:710.33px;top:697.13px;font-size:22.14px;color:#666666;font-weight:normal;transform:scaleX(0.9682);-webkit-text-stroke:0.25px #666666;">27.11.2025 03:43:37</div><div class="a" style="left:946.4px;top:693.05px;width:187.19999999999993px;height:30.200000000000045px;background:#f9a62a;border-radius:6px;"></div><div class="t" id="t60" style="left:958.45px;top:698.43px;font-size:19.43px;color:#fff;font-weight:normal;transform:scaleX(0.9537);-webkit-text-stroke:0.7px #fff;">Ready for validation</div><div class="a" style="left:1234px;top:708px;width:5px;height:2px;background:#5a5a5a;"></div><div class="t" id="t61" style="left:1368.05px;top:697.13px;font-size:22.14px;color:#666666;font-weight:normal;transform:scaleX(0.9735);-webkit-text-stroke:0.25px #666666;">Invoice</div><div class="t" id="t62" style="left:1519.41px;top:697.13px;font-size:22.14px;color:#666666;font-weight:normal;transform:scaleX(0.9855);-webkit-text-stroke:0.25px #666666;">DocBits Testing</div><div class="a" style="left:1765px;top:708px;width:5px;height:2px;background:#5a5a5a;"></div><div class="t" id="t63" style="left:1992.00px;top:697.13px;font-size:22.14px;color:#666666;font-weight:normal;-webkit-text-stroke:0.25px #666666;clip-path:inset(-5px calc(100% - 22px) -5px -5px);">27.11.2025 03:47</div><svg class="a" style="left:2142.5px;top:693.35px;width:30px;height:30px;overflow:visible" viewBox="0 0 30 30"><use href="#puz"/></svg><div class="a" style="left:2184.8px;top:705.45px;width:6.0px;height:6.0px;background:#6e6e6e;border-radius:50%;"></div><div class="a" style="left:2193.9px;top:705.45px;width:6.0px;height:6.0px;background:#6e6e6e;border-radius:50%;"></div><div class="a" style="left:2203.1px;top:705.45px;width:6.0px;height:6.0px;background:#6e6e6e;border-radius:50%;"></div><div class="a" style="left:121px;top:738.9px;width:2151px;height:61.14999999999998px;background:#ffffff;"></div><div class="a" style="left:2015px;top:738.9px;width:257px;height:61.14999999999998px;background:#f5f5f5;"></div><div class="a" style="left:142px;top:755.7px;width:27.5px;height:27.399999999999977px;border:2px solid #6e6e6e;border-radius:3px;"></div><div class="t" id="t64" style="left:312.65px;top:758.28px;font-size:22.14px;color:#2389b0;font-weight:normal;transform:scaleX(0.9508);-webkit-text-stroke:0.25px #2389b0;">multi_document_sam…</div><div class="t" id="t65" style="left:635.08px;top:758.28px;font-size:22.14px;color:#666666;font-weight:normal;transform:scaleX(0.8182);-webkit-text-stroke:0.25px #666666;">1</div><div class="t" id="t66" style="left:710.33px;top:758.28px;font-size:22.14px;color:#666666;font-weight:normal;transform:scaleX(0.9682);-webkit-text-stroke:0.25px #666666;">27.11.2025 03:43:03</div><div class="a" style="left:946.4px;top:754.2px;width:187.19999999999993px;height:30.199999999999932px;background:#f9a62a;border-radius:6px;"></div><div class="t" id="t67" style="left:958.45px;top:759.58px;font-size:19.43px;color:#fff;font-weight:normal;transform:scaleX(0.9537);-webkit-text-stroke:0.7px #fff;">Ready for validation</div><div class="a" style="left:1234px;top:769px;width:5px;height:2px;background:#5a5a5a;"></div><div class="t" id="t68" style="left:1368.05px;top:758.28px;font-size:22.14px;color:#666666;font-weight:normal;transform:scaleX(0.9735);-webkit-text-stroke:0.25px #666666;">Invoice</div><div class="t" id="t69" style="left:1519.41px;top:758.28px;font-size:22.14px;color:#666666;font-weight:normal;transform:scaleX(0.9855);-webkit-text-stroke:0.25px #666666;">DocBits Testing</div><div class="a" style="left:1765px;top:769px;width:5px;height:2px;background:#5a5a5a;"></div><div class="t" id="t70" style="left:1992.00px;top:758.28px;font-size:22.14px;color:#666666;font-weight:normal;-webkit-text-stroke:0.25px #666666;clip-path:inset(-5px calc(100% - 22px) -5px -5px);">27.11.2025 03:47</div><svg class="a" style="left:2142.5px;top:754.50px;width:30px;height:30px;overflow:visible" viewBox="0 0 30 30"><use href="#puz"/></svg><div class="a" style="left:2184.8px;top:766.6px;width:6.0px;height:6.0px;background:#6e6e6e;border-radius:50%;"></div><div class="a" style="left:2193.9px;top:766.6px;width:6.0px;height:6.0px;background:#6e6e6e;border-radius:50%;"></div><div class="a" style="left:2203.1px;top:766.6px;width:6.0px;height:6.0px;background:#6e6e6e;border-radius:50%;"></div><div class="a" style="left:121px;top:800.05px;width:2151px;height:61.15000000000009px;background:#f9fafc;"></div><div class="a" style="left:2015px;top:800.05px;width:257px;height:61.15000000000009px;background:#f5f5f5;"></div><div class="a" style="left:142px;top:816.85px;width:27.5px;height:27.399999999999977px;border:2px solid #6e6e6e;border-radius:3px;"></div><div class="t" id="t71" style="left:312.65px;top:819.43px;font-size:22.14px;color:#2389b0;font-weight:normal;transform:scaleX(0.9508);-webkit-text-stroke:0.25px #2389b0;">multi_document_sam…</div><div class="t" id="t72" style="left:635.08px;top:819.43px;font-size:22.14px;color:#666666;font-weight:normal;transform:scaleX(0.8182);-webkit-text-stroke:0.25px #666666;">1</div><div class="t" id="t73" style="left:710.33px;top:819.43px;font-size:22.14px;color:#666666;font-weight:normal;transform:scaleX(0.9682);-webkit-text-stroke:0.25px #666666;">27.11.2025 03:43:02</div><div class="a" style="left:946.4px;top:815.35px;width:187.19999999999993px;height:30.199999999999932px;background:#f9a62a;border-radius:6px;"></div><div class="t" id="t74" style="left:958.45px;top:820.73px;font-size:19.43px;color:#fff;font-weight:normal;transform:scaleX(0.9537);-webkit-text-stroke:0.7px #fff;">Ready for validation</div><div class="a" style="left:1234px;top:830px;width:5px;height:2px;background:#5a5a5a;"></div><div class="t" id="t75" style="left:1368.05px;top:819.43px;font-size:22.14px;color:#666666;font-weight:normal;transform:scaleX(0.9735);-webkit-text-stroke:0.25px #666666;">Invoice</div><div class="t" id="t76" style="left:1519.41px;top:819.43px;font-size:22.14px;color:#666666;font-weight:normal;transform:scaleX(0.9855);-webkit-text-stroke:0.25px #666666;">DocBits Testing</div><div class="a" style="left:1765px;top:830px;width:5px;height:2px;background:#5a5a5a;"></div><div class="t" id="t77" style="left:1992.00px;top:819.43px;font-size:22.14px;color:#666666;font-weight:normal;-webkit-text-stroke:0.25px #666666;clip-path:inset(-5px calc(100% - 22px) -5px -5px);">27.11.2025 03:47</div><svg class="a" style="left:2142.5px;top:815.65px;width:30px;height:30px;overflow:visible" viewBox="0 0 30 30"><use href="#puz"/></svg><div class="a" style="left:2184.8px;top:827.75px;width:6.0px;height:6.0px;background:#6e6e6e;border-radius:50%;"></div><div class="a" style="left:2193.9px;top:827.75px;width:6.0px;height:6.0px;background:#6e6e6e;border-radius:50%;"></div><div class="a" style="left:2203.1px;top:827.75px;width:6.0px;height:6.0px;background:#6e6e6e;border-radius:50%;"></div><div class="a" style="left:121px;top:861.2px;width:2151px;height:61.14999999999998px;background:#ffffff;"></div><div class="a" style="left:2015px;top:861.2px;width:257px;height:61.14999999999998px;background:#f5f5f5;"></div><div class="a" style="left:142px;top:878.0px;width:27.5px;height:27.399999999999977px;border:2px solid #6e6e6e;border-radius:3px;"></div><div class="t" id="t78" style="left:312.64px;top:880.58px;font-size:22.14px;color:#2389b0;font-weight:normal;transform:scaleX(0.9558);-webkit-text-stroke:0.25px #2389b0;">multi_document_with…</div><div class="t" id="t79" style="left:635.08px;top:880.58px;font-size:22.14px;color:#666666;font-weight:normal;transform:scaleX(0.8182);-webkit-text-stroke:0.25px #666666;">1</div><div class="t" id="t80" style="left:710.33px;top:880.58px;font-size:22.14px;color:#666666;font-weight:normal;transform:scaleX(0.9682);-webkit-text-stroke:0.25px #666666;">27.11.2025 03:42:36</div><div class="a" style="left:946.4px;top:876.5px;width:187.19999999999993px;height:30.200000000000045px;background:#f9a62a;border-radius:6px;"></div><div class="t" id="t81" style="left:958.45px;top:881.88px;font-size:19.43px;color:#fff;font-weight:normal;transform:scaleX(0.9537);-webkit-text-stroke:0.7px #fff;">Ready for validation</div><div class="a" style="left:1234px;top:891px;width:5px;height:2px;background:#5a5a5a;"></div><div class="t" id="t82" style="left:1368.05px;top:880.58px;font-size:22.14px;color:#666666;font-weight:normal;transform:scaleX(0.9735);-webkit-text-stroke:0.25px #666666;">Invoice</div><div class="t" id="t83" style="left:1519.41px;top:880.58px;font-size:22.14px;color:#666666;font-weight:normal;transform:scaleX(0.9855);-webkit-text-stroke:0.25px #666666;">DocBits Testing</div><div class="a" style="left:1765px;top:891px;width:5px;height:2px;background:#5a5a5a;"></div><div class="t" id="t84" style="left:1992.00px;top:880.58px;font-size:22.14px;color:#666666;font-weight:normal;-webkit-text-stroke:0.25px #666666;clip-path:inset(-5px calc(100% - 22px) -5px -5px);">27.11.2025 03:47</div><svg class="a" style="left:2142.5px;top:876.80px;width:30px;height:30px;overflow:visible" viewBox="0 0 30 30"><use href="#puz"/></svg><div class="a" style="left:2184.8px;top:888.9px;width:6.0px;height:6.0px;background:#6e6e6e;border-radius:50%;"></div><div class="a" style="left:2193.9px;top:888.9px;width:6.0px;height:6.0px;background:#6e6e6e;border-radius:50%;"></div><div class="a" style="left:2203.1px;top:888.9px;width:6.0px;height:6.0px;background:#6e6e6e;border-radius:50%;"></div><div class="a" style="left:121px;top:922.35px;width:2151px;height:61.14999999999998px;background:#f9fafc;"></div><div class="a" style="left:2015px;top:922.35px;width:257px;height:61.14999999999998px;background:#f5f5f5;"></div><div class="a" style="left:142px;top:939.15px;width:27.5px;height:27.399999999999977px;border:2px solid #6e6e6e;border-radius:3px;"></div><div class="t" id="t85" style="left:313.60px;top:941.73px;font-size:22.14px;color:#2389b0;font-weight:normal;transform:scaleX(0.9464);-webkit-text-stroke:0.25px #2389b0;">corrupted_document…</div><div class="t" id="t86" style="left:635.08px;top:941.73px;font-size:22.14px;color:#666666;font-weight:normal;transform:scaleX(0.8182);-webkit-text-stroke:0.25px #666666;">1</div><div class="t" id="t87" style="left:710.33px;top:941.73px;font-size:22.14px;color:#666666;font-weight:normal;transform:scaleX(0.9682);-webkit-text-stroke:0.25px #666666;">27.11.2025 03:41:58</div><div class="a" style="left:946.4px;top:937.65px;width:187.19999999999993px;height:30.200000000000045px;background:#f9a62a;border-radius:6px;"></div><div class="t" id="t88" style="left:958.45px;top:943.03px;font-size:19.43px;color:#fff;font-weight:normal;transform:scaleX(0.9537);-webkit-text-stroke:0.7px #fff;">Ready for validation</div><div class="a" style="left:1234px;top:952px;width:5px;height:2px;background:#5a5a5a;"></div><div class="t" id="t89" style="left:1368.05px;top:941.73px;font-size:22.14px;color:#666666;font-weight:normal;transform:scaleX(0.9735);-webkit-text-stroke:0.25px #666666;">Invoice</div><div class="t" id="t90" style="left:1519.41px;top:941.73px;font-size:22.14px;color:#666666;font-weight:normal;transform:scaleX(0.9855);-webkit-text-stroke:0.25px #666666;">DocBits Testing</div><div class="a" style="left:1765px;top:952px;width:5px;height:2px;background:#5a5a5a;"></div><div class="t" id="t91" style="left:1992.00px;top:941.73px;font-size:22.14px;color:#666666;font-weight:normal;-webkit-text-stroke:0.25px #666666;clip-path:inset(-5px calc(100% - 22px) -5px -5px);">27.11.2025 03:47</div><svg class="a" style="left:2142.5px;top:937.95px;width:30px;height:30px;overflow:visible" viewBox="0 0 30 30"><use href="#puz"/></svg><div class="a" style="left:2184.8px;top:950.05px;width:6.0px;height:6.0px;background:#6e6e6e;border-radius:50%;"></div><div class="a" style="left:2193.9px;top:950.05px;width:6.0px;height:6.0px;background:#6e6e6e;border-radius:50%;"></div><div class="a" style="left:2203.1px;top:950.05px;width:6.0px;height:6.0px;background:#6e6e6e;border-radius:50%;"></div><div class="a" style="left:121px;top:983.5px;width:2151px;height:61.15000000000009px;background:#ffffff;"></div><div class="a" style="left:2015px;top:983.5px;width:257px;height:61.15000000000009px;background:#f5f5f5;"></div><div class="a" style="left:142px;top:1000.3px;width:27.5px;height:27.40000000000009px;border:2px solid #6e6e6e;border-radius:3px;"></div><div class="t" id="t92" style="left:312.66px;top:1002.88px;font-size:22.14px;color:#2389b0;font-weight:normal;transform:scaleX(0.9353);-webkit-text-stroke:0.25px #2389b0;">handle_corrupted_file…</div><div class="t" id="t93" style="left:635.08px;top:1002.88px;font-size:22.14px;color:#666666;font-weight:normal;transform:scaleX(0.8182);-webkit-text-stroke:0.25px #666666;">1</div><div class="t" id="t94" style="left:710.33px;top:1002.88px;font-size:22.14px;color:#666666;font-weight:normal;transform:scaleX(0.9682);-webkit-text-stroke:0.25px #666666;">27.11.2025 03:41:32</div><div class="a" style="left:946.4px;top:998.8px;width:187.19999999999993px;height:30.200000000000045px;background:#f9a62a;border-radius:6px;"></div><div class="t" id="t95" style="left:958.45px;top:1004.18px;font-size:19.43px;color:#fff;font-weight:normal;transform:scaleX(0.9537);-webkit-text-stroke:0.7px #fff;">Ready for validation</div><div class="a" style="left:1234px;top:1013px;width:5px;height:2px;background:#5a5a5a;"></div><div class="t" id="t96" style="left:1368.05px;top:1002.88px;font-size:22.14px;color:#666666;font-weight:normal;transform:scaleX(0.9735);-webkit-text-stroke:0.25px #666666;">Invoice</div><div class="t" id="t97" style="left:1519.41px;top:1002.88px;font-size:22.14px;color:#666666;font-weight:normal;transform:scaleX(0.9855);-webkit-text-stroke:0.25px #666666;">DocBits Testing</div><div class="a" style="left:1765px;top:1013px;width:5px;height:2px;background:#5a5a5a;"></div><div class="t" id="t98" style="left:1992.00px;top:1002.88px;font-size:22.14px;color:#666666;font-weight:normal;-webkit-text-stroke:0.25px #666666;clip-path:inset(-5px calc(100% - 22px) -5px -5px);">27.11.2025 03:47</div><svg class="a" style="left:2142.5px;top:999.10px;width:30px;height:30px;overflow:visible" viewBox="0 0 30 30"><use href="#puz"/></svg><div class="a" style="left:2184.8px;top:1011.2px;width:6.0px;height:6.0px;background:#6e6e6e;border-radius:50%;"></div><div class="a" style="left:2193.9px;top:1011.2px;width:6.0px;height:6.0px;background:#6e6e6e;border-radius:50%;"></div><div class="a" style="left:2203.1px;top:1011.2px;width:6.0px;height:6.0px;background:#6e6e6e;border-radius:50%;"></div><div class="a" style="left:121px;top:1044.65px;width:2151px;height:61.149999999999864px;background:#f9fafc;"></div><div class="a" style="left:2015px;top:1044.65px;width:257px;height:61.149999999999864px;background:#f5f5f5;"></div><div class="a" style="left:142px;top:1061.45px;width:27.5px;height:27.399999999999864px;border:2px solid #6e6e6e;border-radius:3px;"></div><div class="t" id="t99" style="left:313.60px;top:1064.03px;font-size:22.14px;color:#2389b0;font-weight:normal;transform:scaleX(0.9284);-webkit-text-stroke:0.25px #2389b0;">test_google_client_2…</div><div class="t" id="t100" style="left:635.08px;top:1064.03px;font-size:22.14px;color:#666666;font-weight:normal;transform:scaleX(0.8182);-webkit-text-stroke:0.25px #666666;">1</div><div class="t" id="t101" style="left:710.33px;top:1064.03px;font-size:22.14px;color:#666666;font-weight:normal;transform:scaleX(0.9682);-webkit-text-stroke:0.25px #666666;">27.11.2025 03:41:17</div><div class="a" style="left:946.4px;top:1059.95px;width:187.19999999999993px;height:30.200000000000045px;background:#f9a62a;border-radius:6px;"></div><div class="t" id="t102" style="left:958.45px;top:1065.33px;font-size:19.43px;color:#fff;font-weight:normal;transform:scaleX(0.9537);-webkit-text-stroke:0.7px #fff;">Ready for validation</div><div class="a" style="left:1234px;top:1075px;width:5px;height:2px;background:#5a5a5a;"></div><div class="t" id="t103" style="left:1368.05px;top:1064.03px;font-size:22.14px;color:#666666;font-weight:normal;transform:scaleX(0.9735);-webkit-text-stroke:0.25px #666666;">Invoice</div><div class="t" id="t104" style="left:1519.42px;top:1064.03px;font-size:22.14px;color:#666666;font-weight:normal;transform:scaleX(0.9826);-webkit-text-stroke:0.25px #666666;">Email Importer</div><div class="a" style="left:1765px;top:1075px;width:5px;height:2px;background:#5a5a5a;"></div><div class="t" id="t105" style="left:1992.00px;top:1064.03px;font-size:22.14px;color:#666666;font-weight:normal;-webkit-text-stroke:0.25px #666666;clip-path:inset(-5px calc(100% - 22px) -5px -5px);">27.11.2025 03:47</div><svg class="a" style="left:2142.5px;top:1060.25px;width:30px;height:30px;overflow:visible" viewBox="0 0 30 30"><use href="#puz"/></svg><div class="a" style="left:2184.8px;top:1072.35px;width:6.0px;height:6.0px;background:#6e6e6e;border-radius:50%;"></div><div class="a" style="left:2193.9px;top:1072.35px;width:6.0px;height:6.0px;background:#6e6e6e;border-radius:50%;"></div><div class="a" style="left:2203.1px;top:1072.35px;width:6.0px;height:6.0px;background:#6e6e6e;border-radius:50%;"></div><div class="a" style="left:121px;top:1105.8px;width:2151px;height:61.15000000000009px;background:#ffffff;"></div><div class="a" style="left:2015px;top:1105.8px;width:257px;height:61.15000000000009px;background:#f5f5f5;"></div><div class="a" style="left:142px;top:1122.6px;width:27.5px;height:27.40000000000009px;border:2px solid #6e6e6e;border-radius:3px;"></div><div class="t" id="t106" style="left:312.66px;top:1125.18px;font-size:22.14px;color:#2389b0;font-weight:normal;transform:scaleX(0.9439);-webkit-text-stroke:0.25px #2389b0;">block_duplicate_docu…</div><div class="t" id="t107" style="left:635.08px;top:1125.18px;font-size:22.14px;color:#666666;font-weight:normal;transform:scaleX(0.8182);-webkit-text-stroke:0.25px #666666;">1</div><div class="t" id="t108" style="left:710.33px;top:1125.18px;font-size:22.14px;color:#666666;font-weight:normal;transform:scaleX(0.9682);-webkit-text-stroke:0.25px #666666;">27.11.2025 03:38:18</div><div class="a" style="left:946.4px;top:1121.1px;width:187.19999999999993px;height:30.200000000000045px;background:#f9a62a;border-radius:6px;"></div><div class="t" id="t109" style="left:958.45px;top:1126.48px;font-size:19.43px;color:#fff;font-weight:normal;transform:scaleX(0.9537);-webkit-text-stroke:0.7px #fff;">Ready for validation</div><div class="a" style="left:1234px;top:1136px;width:5px;height:2px;background:#5a5a5a;"></div><div class="t" id="t110" style="left:1368.05px;top:1125.18px;font-size:22.14px;color:#666666;font-weight:normal;transform:scaleX(0.9735);-webkit-text-stroke:0.25px #666666;">Invoice</div><div class="t" id="t111" style="left:1519.41px;top:1125.18px;font-size:22.14px;color:#666666;font-weight:normal;transform:scaleX(0.9855);-webkit-text-stroke:0.25px #666666;">DocBits Testing</div><div class="a" style="left:1765px;top:1136px;width:5px;height:2px;background:#5a5a5a;"></div><div class="t" id="t112" style="left:1992.00px;top:1125.18px;font-size:22.14px;color:#666666;font-weight:normal;-webkit-text-stroke:0.25px #666666;clip-path:inset(-5px calc(100% - 22px) -5px -5px);">27.11.2025 03:47</div><svg class="a" style="left:2142.5px;top:1121.40px;width:30px;height:30px;overflow:visible" viewBox="0 0 30 30"><use href="#puz"/></svg><div class="a" style="left:2184.8px;top:1133.5px;width:6.0px;height:6.0px;background:#6e6e6e;border-radius:50%;"></div><div class="a" style="left:2193.9px;top:1133.5px;width:6.0px;height:6.0px;background:#6e6e6e;border-radius:50%;"></div><div class="a" style="left:2203.1px;top:1133.5px;width:6.0px;height:6.0px;background:#6e6e6e;border-radius:50%;"></div><div class="a" style="left:121px;top:432px;width:2151px;height:2px;background:#e4e4e4;"></div><div class="a" style="left:121px;top:493px;width:2151px;height:2px;background:#e4e4e4;"></div><div class="a" style="left:121px;top:554px;width:2151px;height:2px;background:#e4e4e4;"></div><div class="a" style="left:121px;top:616px;width:2151px;height:2px;background:#e4e4e4;"></div><div class="a" style="left:121px;top:677px;width:2151px;height:2px;background:#e4e4e4;"></div><div class="a" style="left:121px;top:738px;width:2151px;height:2px;background:#e4e4e4;"></div><div class="a" style="left:121px;top:799px;width:2151px;height:2px;background:#e4e4e4;"></div><div class="a" style="left:121px;top:860px;width:2151px;height:2px;background:#e4e4e4;"></div><div class="a" style="left:121px;top:921px;width:2151px;height:2px;background:#e4e4e4;"></div><div class="a" style="left:121px;top:983px;width:2151px;height:2px;background:#e4e4e4;"></div><div class="a" style="left:121px;top:1044px;width:2151px;height:2px;background:#e4e4e4;"></div><div class="a" style="left:121px;top:1105px;width:2151px;height:2px;background:#e4e4e4;"></div><div class="a" style="left:121px;top:1166px;width:2151px;height:2px;background:#e4e4e4;"></div><div class="a" style="left:121px;top:1168px;width:2151px;height:10px;background:#f9fafc;"></div><div class="a" style="left:2015px;top:1168px;width:257px;height:10px;background:#f5f5f5;"></div><div class="a" style="left:121px;top:173px;width:688px;height:454px;background:#fff;border-radius:6px;box-shadow:0 1px 5px rgba(0,0,0,0.22);z-index:5;"></div><div class="t" id="t113" style="left:145.60px;top:230.38px;font-size:21.43px;color:#141414;font-weight:normal;transform:scaleX(1.0047);z-index:6;-webkit-text-stroke:0.25px #141414;">Status</div><div class="t" id="t114" style="left:145.60px;top:303.98px;font-size:21.43px;color:#141414;font-weight:normal;transform:scaleX(0.9975);z-index:6;-webkit-text-stroke:0.25px #141414;">Assigned To</div><div class="t" id="t115" style="left:145.60px;top:404.48px;font-size:21.43px;color:#141414;font-weight:normal;transform:scaleX(0.9831);z-index:6;-webkit-text-stroke:0.25px #141414;">Assigned To Group</div><div class="t" id="t116" style="left:145.02px;top:477.48px;font-size:21.43px;color:#141414;font-weight:normal;transform:scaleX(0.9812);z-index:6;-webkit-text-stroke:0.25px #141414;">Restart Required</div><div class="a" style="left:425px;top:210px;width:346px;height:60px;background:#fff;border:2px solid #c9c9c9;border-radius:6px;z-index:6;"></div><div class="t" id="t117" style="left:442.73px;top:227.58px;font-size:22.14px;color:#6b6b6b;font-weight:normal;transform:scaleX(0.9731);z-index:6;-webkit-text-stroke:0.25px #6b6b6b;">Status</div><svg class="a" style="left:728px;top:236px;width:15px;height:9px;z-index:6;" viewBox="0 0 15 9"><path d="M0 0 H15 L7.5 8.5Z" fill="#666"/></svg><div class="a" style="left:425px;top:283px;width:347px;height:88px;background:#fff;border:3px solid #2389b0;border-radius:7px;z-index:6;"></div><div class="t" id="t118" style="left:443.75px;top:292.58px;font-size:16.14px;color:#2389b0;font-weight:normal;transform:scaleX(1.0071);z-index:6;-webkit-text-stroke:0.25px #2389b0;">Assigned To</div><div class="t" id="t119" style="left:443.01px;top:307.68px;font-size:21.43px;color:#1c1c1c;font-weight:normal;transform:scaleX(0.9883);z-index:6;-webkit-text-stroke:0.25px #1c1c1c;">Bob Davis, John Doe</div><svg class="a" style="left:728px;top:308.5px;width:15px;height:8.5px;z-index:6;" viewBox="0 0 15 8.5"><path d="M7.5 0 L15 8.5 H0Z" fill="#666"/></svg><div class="a" style="left:449px;top:338px;width:2px;height:25px;background:#111;z-index:6;"></div><div class="a" style="left:425px;top:372px;width:347px;height:320px;background:#fff;border-radius:0 0 6px 6px;box-shadow:0 3px 6px rgba(0,0,0,0.22),0 0 2px rgba(0,0,0,0.1);z-index:7;"></div><div class="a" style="left:425px;top:585px;width:347px;height:53.700000000000045px;background:#e4ecf3;z-index:7;"></div><div class="a" style="left:448px;top:384.6px;width:27.5px;height:27.299999999999955px;border:2px solid #6e6e6e;border-radius:3.5px;z-index:8;"></div><div class="t" id="t120" style="left:502.50px;top:387.47px;font-size:20.86px;color:#111;font-weight:normal;transform:scaleX(1.0201);z-index:8;-webkit-text-stroke:0.25px #111;">All</div><div class="a" style="left:448px;top:438.1px;width:27.5px;height:27.299999999999955px;border:2px solid #6e6e6e;border-radius:3.5px;z-index:8;"></div><div class="t" id="t121" style="left:501.47px;top:440.92px;font-size:20.86px;color:#111;font-weight:normal;transform:scaleX(1.0258);z-index:8;-webkit-text-stroke:0.25px #111;">DocFlow Test</div><div class="a" style="left:448px;top:491.6px;width:27.5px;height:27.299999999999955px;background:#2389b0;border-radius:3.5px;z-index:8;"></div><svg class="a" style="left:448px;top:491.6px;width:27.5px;height:27.3px;z-index:8;" viewBox="0 0 27.5 27.3"><path d="M4.5 14 L10.8 20.3 L23 8" stroke="#fff" stroke-width="3.2" fill="none"/></svg><div class="t" id="t122" style="left:501.51px;top:494.37px;font-size:20.86px;color:#2389b0;font-weight:normal;transform:scaleX(0.9932);z-index:8;-webkit-text-stroke:0.25px #2389b0;">Bob Davis</div><div class="a" style="left:448px;top:545.1px;width:27.5px;height:27.299999999999955px;border:2px solid #6e6e6e;border-radius:3.5px;z-index:8;"></div><div class="t" id="t123" style="left:501.47px;top:547.82px;font-size:20.86px;color:#111;font-weight:normal;transform:scaleX(1.0314);z-index:8;-webkit-text-stroke:0.25px #111;">Email Importer</div><div class="a" style="left:448px;top:598.6px;width:27.5px;height:27.299999999999955px;background:#2389b0;border-radius:3.5px;z-index:8;"></div><svg class="a" style="left:448px;top:598.6px;width:27.5px;height:27.3px;z-index:8;" viewBox="0 0 27.5 27.3"><path d="M4.5 14 L10.8 20.3 L23 8" stroke="#fff" stroke-width="3.2" fill="none"/></svg><div class="t" id="t124" style="left:502.50px;top:601.27px;font-size:20.86px;color:#2389b0;font-weight:normal;z-index:8;-webkit-text-stroke:0.25px #2389b0;">John Doe</div><div class="a" style="left:448px;top:652.1px;width:27.5px;height:27.299999999999955px;border:2px solid #6e6e6e;border-radius:3.5px;z-index:8;"></div><div class="t" id="t125" style="left:501.46px;top:654.72px;font-size:20.86px;color:#111;font-weight:normal;transform:scaleX(1.0362);z-index:8;-webkit-text-stroke:0.25px #111;">DocBits Testing</div><div class="a" style="left:121px;top:1178px;width:2151px;height:73px;background:#fff;"></div><div class="a" style="left:1953px;top:1178px;width:2px;height:73px;background:#e0e0e0;"></div><div class="t" id="t126" style="left:1604.29px;top:1203.38px;font-size:23.43px;color:#666;font-weight:normal;transform:scaleX(0.9053);-webkit-text-stroke:0.25px #666;">Documents per Page:</div><div class="a" style="left:1821.5px;top:1185px;width:106.0px;height:60px;background:#fff;border:2px solid #cdcdcd;border-radius:7px;"></div><div class="t" id="t127" style="left:1840.40px;top:1203.38px;font-size:23.43px;color:#222;font-weight:normal;transform:scaleX(0.8684);-webkit-text-stroke:0.25px #222;">50</div><svg class="a" style="left:1883.5px;top:1211.5px;width:15.5px;height:8px;" viewBox="0 0 15.5 8"><path d="M0 0 H15.5 L7.75 8Z" fill="#666"/></svg><div class="a" style="left:2070.6px;top:1185px;width:84.90000000000009px;height:60px;background:#fff;border:2px solid #cdcdcd;border-radius:7px;"></div><div class="t" id="t128" style="left:2083.71px;top:1203.38px;font-size:23.43px;color:#666;font-weight:normal;transform:scaleX(0.9898);-webkit-text-stroke:0.25px #666;">1 / 17</div><svg class="a" style="left:1990px;top:1206px;width:19.5px;height:18px;" viewBox="0 0 19.5 18"><path d="M1.5 0 V18" stroke="#6fb1cb" stroke-width="3"/><path d="M17.5 1.5 L9.5 9 L17.5 16.5" stroke="#6fb1cb" stroke-width="3" fill="none"/></svg><svg class="a" style="left:2039.7px;top:1206px;width:12px;height:18px;" viewBox="0 0 12 18"><path d="M10.5 1.5 L2.5 9 L10.5 16.5" stroke="#6fb1cb" stroke-width="3" fill="none"/></svg><svg class="a" style="left:2175px;top:1206px;width:12px;height:18px;" viewBox="0 0 12 18"><path d="M1.5 1.5 L9.5 9 L1.5 16.5" stroke="#2389b0" stroke-width="3" fill="none"/></svg><svg class="a" style="left:2217px;top:1206px;width:19.5px;height:18px;" viewBox="0 0 19.5 18"><path d="M18 0 V18" stroke="#2389b0" stroke-width="3"/><path d="M2 1.5 L10 9 L2 16.5" stroke="#2389b0" stroke-width="3" fill="none"/></svg><div class="a" style="left:133px;top:1284px;width:2126px;height:1px;background:#dcdcdc;"></div>
</body></html>
